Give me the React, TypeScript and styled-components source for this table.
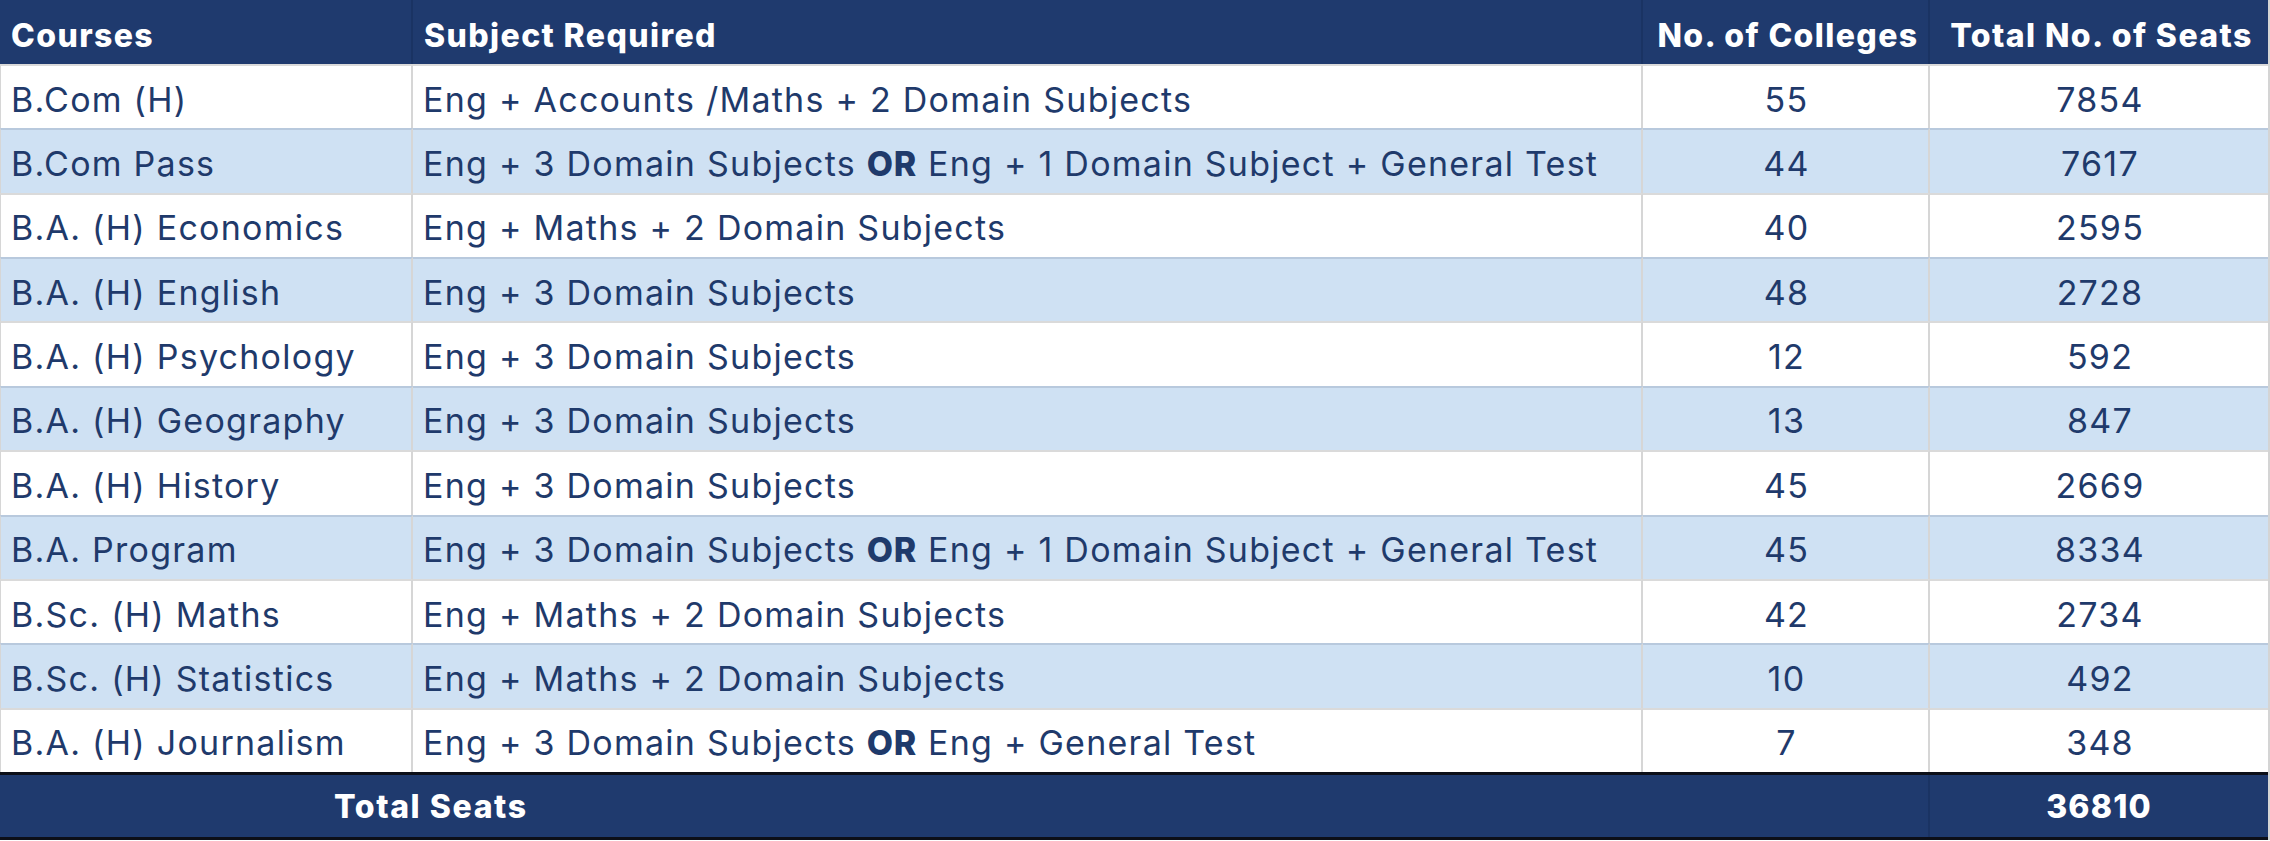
import React from "react";
import styled, { createGlobalStyle } from "styled-components";

const Global = createGlobalStyle`
  html, body { margin: 0; padding: 0; background: #ffffff; }
  body { font-family: "Inter", "Open Sans", sans-serif; }
`;

const NAVY = "#1f3a6e";
const TEXT = "#1f3a6b";

const Table = styled.div`
  display: grid;
  grid-template-columns: 413px 1230px 287px 338px;
  width: 2268px;
  border-right: 2px solid #d4d4d4;
  box-sizing: content-box;
`;

const HeadCell = styled.div<{ $align?: string; $last?: boolean }>`
  height: 64px;
  box-sizing: border-box;
  background: ${NAVY};
  color: #ffffff;
  font-family: "Inter", sans-serif;
  font-weight: 800;
  font-size: 32px;
  letter-spacing: 1.4px;
  display: flex;
  align-items: center;
  justify-content: ${(p) => (p.$align === "center" ? "center" : "flex-start")};
  padding: 6px 6px 0 11px;
  border-right: ${(p) => (p.$last ? "none" : "2px solid #1a3363")};
  white-space: nowrap;
`;

const Cell = styled.div<{ $align?: string; $shade?: boolean; $first?: boolean; $last?: boolean }>`
  height: 64.36px;
  box-sizing: border-box;
  background: ${(p) => (p.$shade ? "#cfe1f3" : "#ffffff")};
  border-top: 2px solid ${(p) => (p.$shade ? "#b8c9dd" : "#dadada")};
  border-right: ${(p) => (p.$last ? "none" : "2px solid #d6d6d6")};
  border-left: ${(p) => (p.$first ? "1px solid #d6d6d6" : "none")};
  color: ${TEXT};
  font-family: "Inter", sans-serif;
  font-weight: 400;
  font-size: 34px;
  letter-spacing: 1.25px;
  display: flex;
  align-items: center;
  justify-content: ${(p) => (p.$align === "center" ? "center" : "flex-start")};
  padding: 4px 8px 0 10px;
  white-space: nowrap;
`;

const CellText = styled.span`
  white-space: pre;
`;

const Strong = styled.b`
  font-weight: 800;
  letter-spacing: 0.8px;
`;

const TotalRow = styled.div`
  grid-column: 1 / -1;
  display: grid;
  grid-template-columns: 1930px 338px;
  height: 68px;
  box-sizing: border-box;
  border-top: 3px solid #0c0f18;
  border-bottom: 3px solid #0c0f18;
  background: ${NAVY};
`;

const TotalLabel = styled.div`
  display: flex;
  align-items: center;
  padding: 2px 0 0 334px;
  color: #ffffff;
  font-family: "Inter", sans-serif;
  font-weight: 800;
  font-size: 32px;
  letter-spacing: 1.6px;
  border-right: 2px solid #1a3363;
`;

const TotalValue = styled.div`
  display: flex;
  align-items: center;
  justify-content: center;
  padding-top: 2px;
  color: #ffffff;
  font-family: "Inter", sans-serif;
  font-weight: 800;
  font-size: 32px;
  letter-spacing: 1.2px;
`;

type Row = { course: string; subject: React.ReactNode; colleges: number; seats: number };

const Or = () => <Strong>OR</Strong>;

const rows: Row[] = [
  { course: "B.Com (H)", subject: "Eng + Accounts /Maths + 2 Domain Subjects", colleges: 55, seats: 7854 },
  { course: "B.Com Pass", subject: <>Eng + 3 Domain Subjects <Or /> Eng + 1 Domain Subject + General Test</>, colleges: 44, seats: 7617 },
  { course: "B.A. (H) Economics", subject: "Eng + Maths + 2 Domain Subjects", colleges: 40, seats: 2595 },
  { course: "B.A. (H) English", subject: "Eng + 3 Domain Subjects", colleges: 48, seats: 2728 },
  { course: "B.A. (H) Psychology", subject: "Eng + 3 Domain Subjects", colleges: 12, seats: 592 },
  { course: "B.A. (H) Geography", subject: "Eng + 3 Domain Subjects", colleges: 13, seats: 847 },
  { course: "B.A. (H) History", subject: "Eng + 3 Domain Subjects", colleges: 45, seats: 2669 },
  { course: "B.A. Program", subject: <>Eng + 3 Domain Subjects <Or /> Eng + 1 Domain Subject + General Test</>, colleges: 45, seats: 8334 },
  { course: "B.Sc. (H) Maths", subject: "Eng + Maths + 2 Domain Subjects", colleges: 42, seats: 2734 },
  { course: "B.Sc. (H) Statistics", subject: "Eng + Maths + 2 Domain Subjects", colleges: 10, seats: 492 },
  { course: "B.A. (H) Journalism", subject: <>Eng + 3 Domain Subjects <Or /> Eng + General Test</>, colleges: 7, seats: 348 },
];

export default function App() {
  return (
    <>
      <Global />
      <Table>
        <HeadCell>Courses</HeadCell>
        <HeadCell>Subject Required</HeadCell>
        <HeadCell $align="center">No. of Colleges</HeadCell>
        <HeadCell $align="center" $last>Total No. of Seats</HeadCell>
        {rows.map((r, i) => {
          const shade = i % 2 === 1;
          return (
            <React.Fragment key={r.course}>
              <Cell $shade={shade} $first><CellText>{r.course}</CellText></Cell>
              <Cell $shade={shade}><CellText>{r.subject}</CellText></Cell>
              <Cell $shade={shade} $align="center"><CellText>{r.colleges}</CellText></Cell>
              <Cell $shade={shade} $align="center" $last><CellText>{r.seats}</CellText></Cell>
            </React.Fragment>
          );
        })}
        <TotalRow>
          <TotalLabel>Total Seats</TotalLabel>
          <TotalValue>36810</TotalValue>
        </TotalRow>
      </Table>
    </>
  );
}
